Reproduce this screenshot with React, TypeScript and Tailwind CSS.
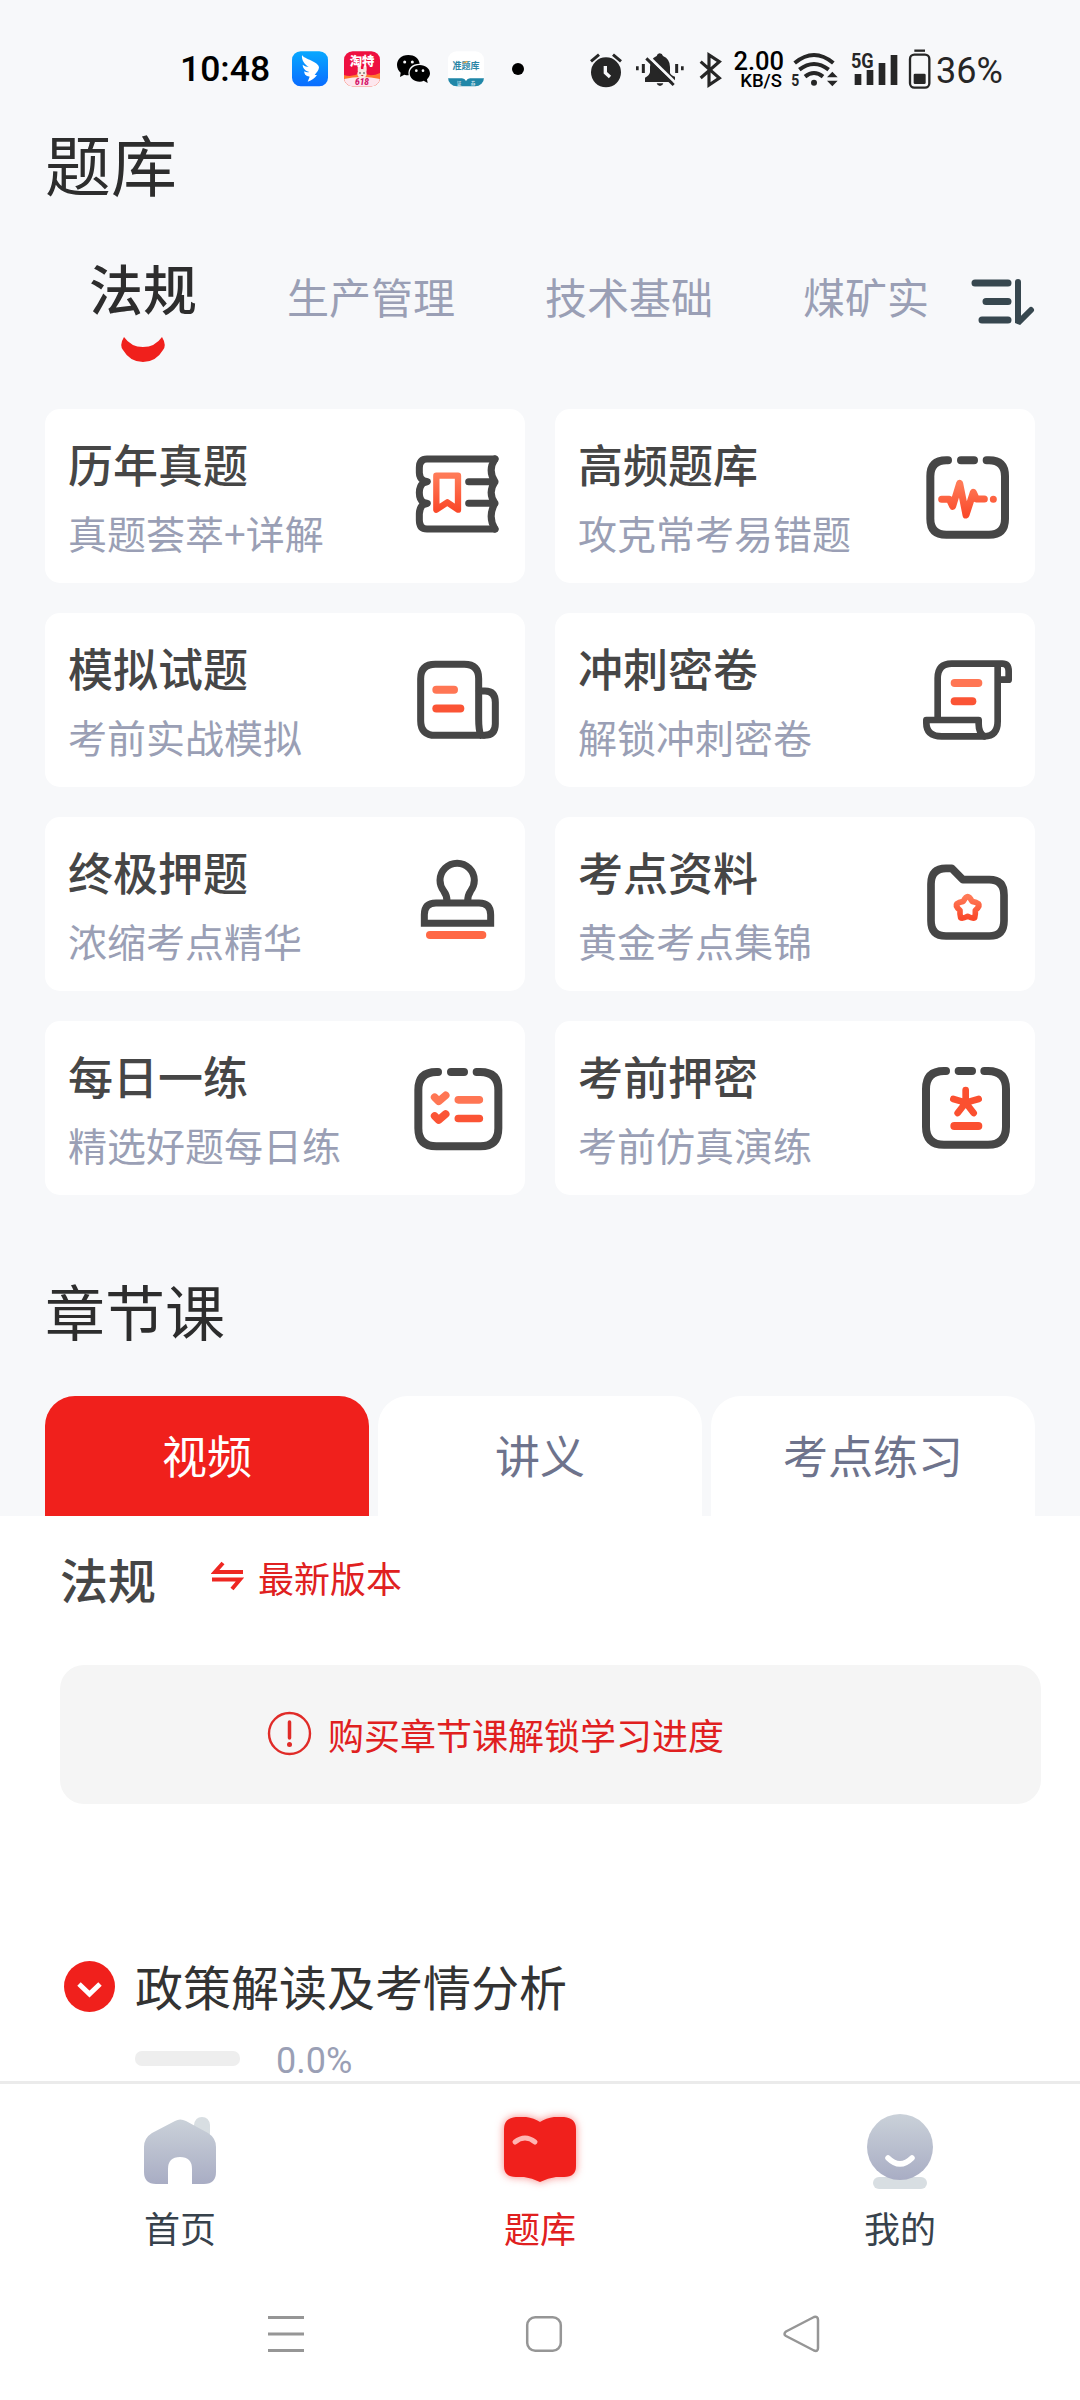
import type { ReactNode } from "react";

const SUBJECTS = ["法规", "生产管理", "技术基础", "煤矿实"];

const LESSON_TABS = ["视频", "讲义", "考点练习"];

function StatusBar() {
  return (
    <div className="flex h-[110px] shrink-0 items-center pt-[27px] pl-[180px] font-['Roboto',sans-serif] text-black">
      <span className="w-[112px] pt-[3px] text-[35.500px] leading-none font-medium">10:48</span>
      <svg className="h-9 w-9" viewBox="0 0 108 108">
        <defs>
          <linearGradient id="wing" x1="0" y1="0" x2="0" y2="1">
            <stop offset="0" stopColor="#08a8ff" />
            <stop offset="1" stopColor="#0a6cff" />
          </linearGradient>
        </defs>
        <rect y="1" width="108" height="105" rx="26" fill="url(#wing)" />
        <path
          d="M30 12C36 24 80 32 81 49C81 58 74 64 68 72H75C68 82 60 87 47 92L53 77C40 76 36 68 37 61C42 64 47 64 52 63C40 59 32 52 32 41C38 46 44 47 50 48C38 40 28 28 30 12Z"
          fill="#fff"
        />
      </svg>
      <svg className="ml-4 h-9 w-9" viewBox="0 0 108 108">
        <defs>
          <clipPath id="taoClip">
            <rect y="1" width="108" height="105" rx="26" />
          </clipPath>
        </defs>
        <g clipPath="url(#taoClip)">
          <rect width="108" height="108" fill="#ee1040" />
          <path d="M0 72Q26 80 52 64Q78 80 108 66V108H0Z" fill="#ff7a2e" />
          <path d="M0 84Q54 72 108 84V108H0Z" fill="#fde7ee" />
          <circle cx="54" cy="68" r="14" fill="#f7ebe4" />
          <ellipse cx="46" cy="54" rx="5" ry="11" fill="#f5e8e0" />
          <ellipse cx="63" cy="54" rx="5" ry="11" fill="#f5e8e0" />
          <circle cx="48" cy="66" r="2.500" fill="#333" />
          <circle cx="60" cy="66" r="2.500" fill="#333" />
          <path d="M50 72H59Q55 79 50 72Z" fill="#c33" />
          <text x="54" y="44" textAnchor="middle" fontSize="37" fontWeight="900" fill="#fff" fontFamily="Noto Sans CJK SC">
            淘特
          </text>
          <text x="54" y="102" textAnchor="middle" fontSize="25" fontWeight="900" fontStyle="italic" fill="#d3146a" fontFamily="Roboto">
            618
          </text>
        </g>
      </svg>
      <svg className="ml-4 h-9 w-9" viewBox="0 0 108 108">
        <path
          d="M37 12C15 12 3 26 3 42C3 52 8 60 14 65L12 78L25 71Q30 73 38 73C34 52 48 38 71 38C69 22 55 12 37 12Z"
          fill="#000"
        />
        <path d="M71 42C53 42 41 53 41 67C41 81 54 92 71 92Q78 92 83 89L95 96L93 85C98 80 102 74 102 67C102 53 89 42 71 42Z" fill="#000" />
        <circle cx="26" cy="33" r="4.500" fill="#f7f8fa" />
        <circle cx="49" cy="33" r="4.500" fill="#f7f8fa" />
        <circle cx="61" cy="59" r="4" fill="#f7f8fa" />
        <circle cx="81" cy="59" r="4" fill="#f7f8fa" />
      </svg>
      <svg className="ml-4 h-9 w-9" viewBox="0 0 108 108">
        <defs>
          <clipPath id="bankClip">
            <rect y="1" width="108" height="105" rx="26" />
          </clipPath>
        </defs>
        <g clipPath="url(#bankClip)">
          <rect width="108" height="108" fill="#fff" />
          <path d="M0 82H42Q50 82 54 90Q58 82 66 82H108V108H0Z" fill="#2087a8" />
          <text x="54" y="54" textAnchor="middle" fontSize="27" fontWeight="700" fill="#2b86a6" fontFamily="Noto Sans CJK SC">
            准题库
          </text>
          <path d="M46 36L58 31" stroke="#f3a43b" strokeWidth="4" />
          <text x="33" y="101" textAnchor="middle" fontSize="14" fill="#fff" fontFamily="Noto Sans CJK SC">
            证
          </text>
          <text x="75" y="101" textAnchor="middle" fontSize="14" fill="#fff" fontFamily="Noto Sans CJK SC">
            券
          </text>
        </g>
      </svg>
      <span className="ml-7 h-3 w-3 rounded-full bg-black" />

      {/* system indicators */}
      <svg className="ml-[66px] h-10 w-[32px]" viewBox="90 54 96 120" fill="none">
        <circle cx="138" cy="124" r="45" fill="#262626" />
        <path d="M93 91L117 71M183 91L159 71" stroke="#262626" strokeWidth="9" />
        <path d="M136 105V125L150 138" stroke="#f7f8fa" strokeWidth="10" />
      </svg>
      <svg className="ml-[13px] h-10 w-[50px]" viewBox="225 54 150 120" fill="none">
        <path
          d="M290 75Q292 67 299 67Q307 67 309 75Q330 84 330 108V126Q332 133 345 137V153H255V140Q268 134 270 124V108Q270 84 290 75Z"
          fill="#262626"
        />
        <path d="M290 157H310Q308 165 300 165Q292 165 290 157Z" fill="#262626" />
        <path d="M265 76L347 156" stroke="#f7f8fa" strokeWidth="9" />
        <path d="M259 82L341 162" stroke="#262626" strokeWidth="9" />
        <path d="M232 106V118M367 106V118" stroke="#262626" strokeWidth="8" />
        <path d="M250 99V126M350 99V126" stroke="#262626" strokeWidth="9" />
      </svg>
      <svg className="ml-[14px] h-10 w-[24px]" viewBox="417 54 72 120" fill="none">
        <path d="M422 92L478 141L447 162V72L478 92L422 141" stroke="#262626" strokeWidth="9.500" />
      </svg>
      <div className="ml-[9px] flex w-[52px] flex-col items-end pt-[2px] font-medium">
        <span className="text-[25.500px] leading-[22px]">2.00</span>
        <span className="pr-[2px] text-[18.500px] leading-[18px]">KB/S</span>
      </div>
      <svg className="ml-[7px] h-10 w-[48px]" viewBox="695 54 144 120" fill="none">
        <path d="M706 96Q764 48 822 96" stroke="#262626" strokeWidth="12" />
        <path d="M720 116Q764 82 808 116" stroke="#262626" strokeWidth="12" />
        <path d="M737 137Q764 115 791 137" stroke="#262626" strokeWidth="12" />
        <circle cx="764" cy="155" r="9" fill="#262626" />
        <path d="M803 139L819 122L835 139ZM803 149L819 166L835 149Z" fill="#262626" />
        <text x="696" y="165" fontSize="51" fontWeight="700" fill="#262626" textLength="24" lengthAdjust="spacingAndGlyphs" fontFamily="Roboto">
          5
        </text>
      </svg>
      <svg className="ml-[12px] h-10 w-[48px]" viewBox="875 54 144 120" fill="none">
        <path d="M886 129h20v33h-20zM922 117h20v45h-20zM958 96h20v66h-20zM994 72h20v90h-20z" fill="#262626" />
        <text x="875" y="110" fontSize="58" fontWeight="700" fill="#262626" textLength="68" lengthAdjust="spacingAndGlyphs" fontFamily="Roboto">
          5G
        </text>
      </svg>
      <svg className="ml-[9px] h-10 w-[24px]" viewBox="1044 55 72 120" fill="none">
        <rect x="1050" y="72" width="58" height="99" rx="13" stroke="#262626" strokeWidth="7" />
        <path d="M1063 60H1095" stroke="#262626" strokeWidth="7" />
        <rect x="1061" y="129" width="36" height="31" rx="4" fill="#262626" />
      </svg>
      <span className="ml-[4px] pt-[4px] text-[36px] leading-none text-[#262626]">36%</span>
    </div>
  );
}

function CardIcon({ children }: { children: ReactNode }) {
  return (
    <svg
      className="h-[110px] w-[110px] shrink-0"
      viewBox="0 3 330 330"
      fill="none"
      stroke="#464646"
      strokeWidth="21"
      strokeLinecap="round"
      strokeLinejoin="round"
    >
      {children}
    </svg>
  );
}

const CARDS = [
  {
    title: "历年真题",
    desc: "真题荟萃+详解",
    icon: (
      <>
        <path d="M270 57H66Q43 57 43 84V98Q43 113 55 122L67 125L55 129Q43 138 43 158Q43 178 55 187L67 190L55 194Q43 203 43 222V240Q43 267 66 267H270" />
        <path d="M270 57Q247 91 270 125Q247 158 270 190Q247 229 270 267M191 125H270M191 190H270" />
        <path d="M94 107H159V209L127 187L94 209Z" stroke="url(#warm)" strokeWidth="19" />
      </>
    ),
  },
  {
    title: "高频题库",
    desc: "攻克常考易错题",
    icon: (
      <>
        <path d="M99 61H94Q46 61 46 109V236Q46 284 94 284H222Q270 284 270 236V109Q270 61 222 61H215M138 61H177" strokeWidth="24" />
        <path d="M80 178H103L113 199L134 130L153 225L175 157L184 177H208M235 178V178.1" stroke="url(#warm)" />
      </>
    ),
  },
  {
    title: "模拟试题",
    desc: "考前实战模拟",
    icon: (
      <>
        <path d="M235 274H91Q47 274 47 230V104Q47 61 91 61H178Q221 61 221 104V225Q221 255 227 274" />
        <path d="M223 141H240Q271 141 271 175V240Q271 274 238 274" />
        <path d="M94 137.500H147" stroke="#ff7654" strokeWidth="24" />
        <path d="M94 193.500H166" stroke="#fb5435" strokeWidth="24" />
      </>
    ),
  },
  {
    title: "冲刺密卷",
    desc: "解锁冲刺密卷",
    icon: (
      <>
        <path d="M68 222V103Q68 59 110 59H262Q281 59 281 82V107H252M248 62V232Q248 277 208 277" strokeWidth="20" />
        <path d="M208 277H80Q34 277 34 237V228H191V240Q191 267 208 277" strokeWidth="20" />
        <path d="M119 117H190" stroke="#ff7654" strokeWidth="24" />
        <path d="M119 172H172" stroke="#fb5435" strokeWidth="24" />
      </>
    ),
  },
  {
    title: "终极押题",
    desc: "浓缩考点精华",
    icon: (
      <>
        <path d="M126 160Q126 142 116 129Q105 114 105 97A51.5 51.5 0 0 1 208 97Q208 114 197 129Q188 142 188 160" strokeLinecap="butt" />
        <path d="M58 226V200Q58 165 93 165H222Q257 165 257 200V226Z" strokeLinejoin="miter" />
        <path d="M75 261H232" stroke="#ff6845" strokeWidth="24" />
      </>
    ),
  },
  {
    title: "考点资料",
    desc: "黄金考点集锦",
    icon: (
      <>
        <path d="M48 108Q48 61 93 61H110L144 95H223Q267 95 267 141V218Q267 264 223 264H93Q48 264 48 218Z" strokeWidth="23" />
        <path
          d="M158 146Q164 146 171 160Q184 162 191 168Q196 174 181 187Q182 199 179 209Q174 213 158 205Q142 213 137 209Q134 199 135 187Q120 174 125 168Q132 162 145 160Q152 146 158 146Z"
          stroke="url(#warm)"
          strokeWidth="17"
        />
      </>
    ),
  },
  {
    title: "每日一练",
    desc: "精选好题每日练",
    icon: (
      <>
        <path d="M99 60H94Q40 60 40 114V229Q40 283 94 283H226Q280 283 280 229V114Q280 60 226 60H215M138 60H177" strokeWidth="24" />
        <path d="M89 136L101 148L122 130M160 143.500H223" stroke="#ff7654" strokeWidth="23" />
        <path d="M89 192L101 204L122 186M160 199.500H223" stroke="#fb5435" strokeWidth="23" />
      </>
    ),
  },
  {
    title: "考前押密",
    desc: "考前仿真演练",
    icon: (
      <>
        <path d="M93 57H87Q33 57 33 111V224Q33 278 87 278H219Q273 278 273 224V111Q273 57 219 57H208M131 57H171" strokeWidth="24" />
        <path d="M152 114V152L115 141M152 152L191 141M152 152L128 183M152 152L176 183" stroke="#fb5030" strokeWidth="20" />
        <path d="M118 222H190" stroke="#fb5030" strokeWidth="24" />
      </>
    ),
  },
];

function SubjectTabs() {
  return (
    <div className="flex h-[187px] shrink-0 pr-[45px] pl-[89px]">
      <div className="flex w-[841px] gap-[90px]">
        {SUBJECTS.map((s, i) =>
          i === 0 ? (
            <div key={s} className="flex shrink-0 flex-col items-center pt-[36px]">
              <span className="text-[54px] leading-[60px] font-medium text-[#2d2d2d]">{s}</span>
              <svg className="mt-[18px] h-[27px] w-[44px]" viewBox="0 0 44 27">
                <path d="M3 1Q10 11 22 11Q34 11 41 1Q46 9 42 14Q35 26 22 26Q9 26 2 14Q-2 9 3 1Z" fill="#f0201c" />
              </svg>
            </div>
          ) : (
            <span key={s} className="shrink-0 pt-[50px] text-[42px] leading-[48px] text-[#9a9fb5]">
              {s}
            </span>
          )
        )}
      </div>
      <svg className="mt-[55px] ml-[41px] h-[50px] w-[64px]" viewBox="0 0 64 50" fill="none" stroke="#37474f" strokeLinecap="round">
        <path d="M4 6H37M15 24.500H37M11 43H37" strokeWidth="7" />
        <path d="M47 5V46L60 33" strokeWidth="6" strokeLinejoin="bevel" />
      </svg>
    </div>
  );
}

function Cards() {
  return (
    <div className="grid shrink-0 grid-cols-2 gap-[30px] px-[45px]">
      {CARDS.map((c) => (
        <div key={c.title} className="flex h-[174px] items-center justify-between rounded-[15px] bg-white pr-[10px] pl-[23px]">
          <div className="flex flex-col gap-[19px] pt-[3px]">
            <span className="text-[45px] leading-[50px] font-medium text-[#464646]">{c.title}</span>
            <span className="text-[39px] leading-[48px] text-[#9a9fb5]">{c.desc}</span>
          </div>
          <CardIcon>{c.icon}</CardIcon>
        </div>
      ))}
    </div>
  );
}

function Lessons() {
  return (
    <div className="flex h-[565px] shrink-0 flex-col overflow-hidden bg-white">
      <div className="flex h-[149px] shrink-0 items-center pl-[60px]">
        <span className="mt-[-26px] text-[48px] leading-[52px] font-medium text-[#464646]">法规</span>
        <svg className="mt-[-29px] ml-[55px] h-[30px] w-[33px]" viewBox="0 0 33 30" fill="none" stroke="#ee2722" strokeWidth="4">
          <path d="M32 11H4L12 2M1 18.500H29L21 28" />
        </svg>
        <span className="mt-[-28px] ml-[14px] text-[36px] leading-[40px] text-[#e02020]">最新版本</span>
      </div>
      <div className="mr-[39px] ml-[60px] flex h-[139px] shrink-0 items-center rounded-3xl bg-[#f5f5f5] pl-[207px]">
        <svg className="mt-[-1px] h-[46px] w-[46px]" viewBox="0 0 46 46" fill="none" stroke="#e02b28" strokeWidth="2.400">
          <circle cx="22.500" cy="22.500" r="20.500" />
          <path d="M22.500 11V27" strokeWidth="3.500" strokeLinecap="round" />
          <circle cx="22.500" cy="33.500" r="2.500" fill="#e02b28" stroke="none" />
        </svg>
        <span className="mt-[-2px] ml-[15px] text-[36px] leading-[40px] text-[#e02020]">购买章节课解锁学习进度</span>
      </div>
      <div className="mt-[155px] flex h-[54px] shrink-0 items-center pl-[64px]">
        <svg className="h-[51px] w-[51px]" viewBox="0 0 51 51" fill="none">
          <circle cx="25.500" cy="25.500" r="25.500" fill="#f0201c" />
          <path d="M15 23L25.500 33L36 23" stroke="#fff" strokeWidth="5" />
        </svg>
        <span className="mt-[-2px] ml-[20px] text-[48px] leading-[52px] text-[#333333]">政策解读及考情分析</span>
      </div>
      <div className="mt-[23px] flex h-[44px] shrink-0 items-center pl-[135px]">
        <span className="h-[15px] w-[105px] rounded-[7px] bg-[#eeeeee]" />
        <span className="mt-[5px] ml-[36px] font-['Roboto',sans-serif] text-[36px] leading-[40px] text-[#9a9fb5]">0.0%</span>
      </div>
    </div>
  );
}

function BottomNav() {
  return (
    <div className="flex h-[189px] shrink-0 border-t-[3px] border-[#ebebeb] bg-white text-[36px] leading-[40px] text-[#37424c]">
      <div className="flex flex-1 flex-col items-center gap-[7px] pt-4">
        <svg className="h-[100px] w-[100px]" viewBox="130 2100 100 100">
          <defs>
            <linearGradient id="cool" x1="0" y1="0" x2="0" y2="1">
              <stop offset="0" stopColor="#cad1d9" />
              <stop offset="1" stopColor="#a9adc4" />
            </linearGradient>
          </defs>
          <path d="M194 2140V2125Q195 2117 202 2117Q209 2117 210 2125V2140Z" fill="#d8dee2" />
          <path
            d="M175 2121Q180 2118 186 2121L208 2133Q216 2138 216 2147V2172Q216 2184 204 2184H192V2169Q192 2157 180 2157Q168 2157 168 2169V2184H156Q144 2184 144 2172V2147Q144 2138 152 2133Z"
            fill="url(#cool)"
          />
        </svg>
        <span>首页</span>
      </div>
      <div className="flex flex-1 flex-col items-center gap-[7px] pt-4">
        <svg className="h-[100px] w-[100px] overflow-visible" viewBox="490 2100 100 100">
          <path
            d="M516 2117H526Q534 2118 540 2122Q546 2118 554 2117H564Q576 2118 576 2129V2166Q576 2177 564 2177H556Q548 2178 540 2182Q532 2178 524 2177H516Q504 2177 504 2166V2129Q504 2118 516 2117Z"
            fill="#f0201c"
            className="drop-shadow-[0_0_4px_rgba(240,32,28,0.55)]"
          />
          <path d="M515 2142Q525 2134 535 2142" fill="none" stroke="#ffb5b3" strokeWidth="5" strokeLinecap="round" />
        </svg>
        <span className="text-[#e02020]">题库</span>
      </div>
      <div className="flex flex-1 flex-col items-center gap-[7px] pt-4">
        <svg className="h-[100px] w-[100px]" viewBox="850 2100 100 100">
          <rect x="873" y="2177" width="54" height="12" rx="6" fill="#d8dee2" />
          <circle cx="900" cy="2147" r="33" fill="url(#cool)" />
          <path d="M888 2158Q900 2170 912 2158" fill="none" stroke="#fff" strokeWidth="5.500" strokeLinecap="round" />
        </svg>
        <span>我的</span>
      </div>
    </div>
  );
}

export default function App() {
  return (
    <div className="flex h-[2400px] w-[1080px] flex-col overflow-hidden bg-[#f7f8fa] font-['Noto_Sans_CJK_SC',sans-serif]">
      <svg className="absolute h-0 w-0">
        <defs>
          <linearGradient id="warm" x1="0" y1="0" x2="0" y2="1">
            <stop offset="0" stopColor="#ff7a57" />
            <stop offset="1" stopColor="#fa4a2b" />
          </linearGradient>
        </defs>
      </svg>
      <StatusBar />
      <h1 className="flex h-[112px] shrink-0 items-center pb-[8px] pl-[45px] text-[66px] leading-none text-[#2d2d2d]">题库</h1>
      <SubjectTabs />
      <Cards />
      <h2 className="flex h-[201px] shrink-0 items-center pt-[28px] pl-[45px] text-[60px] leading-none text-[#2d2d2d]">章节课</h2>
      <div className="grid h-[120px] shrink-0 grid-cols-3 gap-[9px] px-[45px] text-[45px] leading-none">
        {LESSON_TABS.map((t, i) => (
          <div
            key={t}
            className={
              i === 0
                ? "flex items-center justify-center rounded-t-[30px] bg-[#f0201c] pb-[3px] text-white"
                : "flex items-center justify-center rounded-t-[30px] bg-white pb-[3px] text-[#6e738c]"
            }
          >
            {t}
          </div>
        ))}
      </div>
      <Lessons />
      <BottomNav />
      <div className="flex h-[130px] shrink-0 items-center bg-white pb-[3px] pl-[267px]">
        <svg className="h-[38px] w-[38px]" viewBox="0 0 38 38" stroke="#969696" strokeWidth="3">
          <path d="M1 2.500H37M1 19H37M1 35.500H37" />
        </svg>
        <svg className="ml-[220px] h-[38px] w-[38px]" viewBox="0 0 38 38" fill="none" stroke="#969696" strokeWidth="2.500">
          <rect x="2.200" y="2.200" width="33.600" height="33.600" rx="8" />
        </svg>
        <svg className="ml-[219px] h-[38px] w-[38px]" viewBox="0 0 38 38" fill="none" stroke="#969696" strokeWidth="2.500" strokeLinejoin="round">
          <path d="M4 16.500L32 2Q36 1 36 5V33Q36 37 32 35.500L4 21Q1 19 4 16.500Z" />
        </svg>
      </div>
    </div>
  );
}
